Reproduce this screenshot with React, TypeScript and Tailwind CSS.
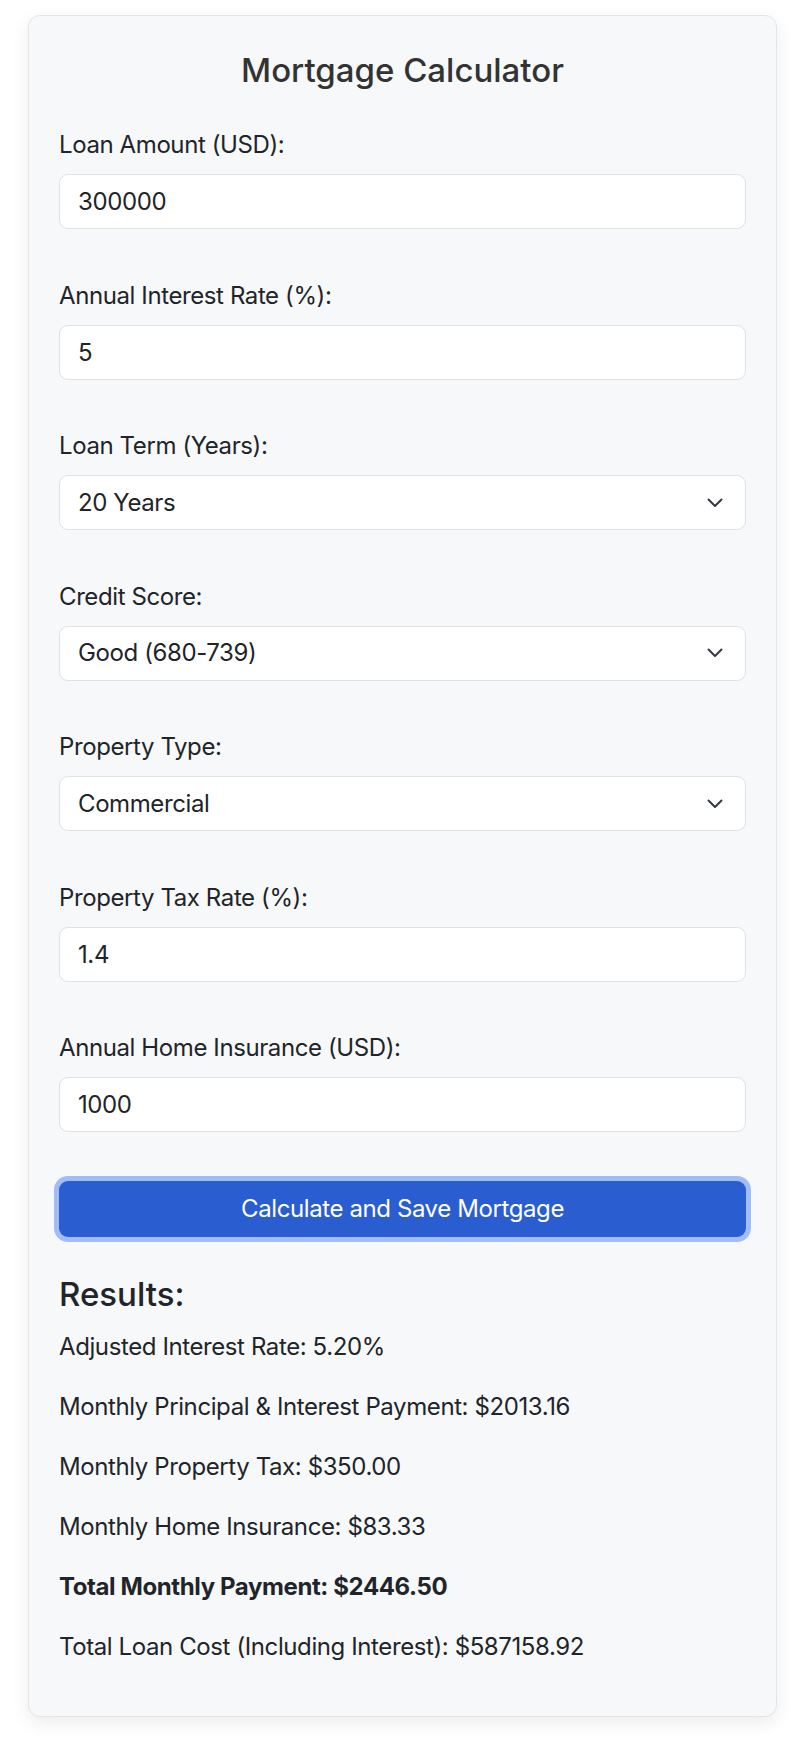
import React from "react";

const font = { fontFamily: "Inter, 'Noto Sans', sans-serif" };

function Chevron() {
  return (
    <svg
      className="pointer-events-none absolute right-[23px] top-1/2 -translate-y-1/2"
      width="16"
      height="10"
      viewBox="0 0 16 10"
      fill="none"
    >
      <path d="M1.5 1.5L8 8L14.5 1.5" stroke="#343a40" strokeWidth="2" strokeLinecap="round" strokeLinejoin="round" />
    </svg>
  );
}

function Field({ label, value }: { label: string; value: string }) {
  return (
    <div className="flex flex-col">
      <label className="mb-[11px] text-[24px] leading-[36px] tracking-[-0.4px] text-[#212529]">{label}</label>
      <input
        defaultValue={value}
        className="h-[55px] w-full rounded-[9px] border border-[#dee2e6] bg-white px-[18px] text-[24px] tracking-[-0.4px] text-[#212529] outline-none"
      />
    </div>
  );
}

function SelectField({ label, value, options }: { label: string; value: string; options: string[] }) {
  return (
    <div className="flex flex-col">
      <label className="mb-[11px] text-[24px] leading-[36px] tracking-[-0.4px] text-[#212529]">{label}</label>
      <div className="relative">
        <select
          defaultValue={value}
          className="h-[55px] w-full appearance-none rounded-[9px] border border-[#dee2e6] bg-white px-[18px] text-[24px] tracking-[-0.4px] text-[#212529] outline-none"
        >
          {options.map((o) => (
            <option key={o}>{o}</option>
          ))}
        </select>
        <Chevron />
      </div>
    </div>
  );
}

const results = [
  "Adjusted Interest Rate: 5.20%",
  "Monthly Principal & Interest Payment: $2013.16",
  "Monthly Property Tax: $350.00",
  "Monthly Home Insurance: $83.33",
];

export default function App() {
  return (
    <div className="min-h-[1748px] w-full bg-white pt-[15px]" style={font}>
      <div className="ml-[28px] w-[749px] rounded-[12px] border border-[#e3e5e9] bg-[#f7f8fa] px-[30px] pb-[51px] pt-[30px] shadow-[0_6px_18px_rgba(0,0,0,0.08)]">
        <h1 className="mb-[33px] text-center text-[33px] font-medium leading-[48px] text-[#333333]">
          Mortgage Calculator
        </h1>
        <div className="flex flex-col gap-[48.5px]">
          <Field label="Loan Amount (USD):" value="300000" />
          <Field label="Annual Interest Rate (%):" value="5" />
          <SelectField label="Loan Term (Years):" value="20 Years" options={["10 Years", "15 Years", "20 Years", "30 Years"]} />
          <SelectField
            label="Credit Score:"
            value="Good (680-739)"
            options={["Excellent (740+)", "Good (680-739)", "Fair (620-679)", "Poor (<620)"]}
          />
          <SelectField label="Property Type:" value="Commercial" options={["Residential", "Commercial"]} />
          <Field label="Property Tax Rate (%):" value="1.4" />
          <Field label="Annual Home Insurance (USD):" value="1000" />
          <button className="h-[56px] w-full rounded-[9px] bg-[#2a5dd0] text-[24px] tracking-[-0.4px] text-white shadow-[0_0_0_5px_#a1bcf6]">
            Calculate and Save Mortgage
          </button>
        </div>
        <h2 className="mt-[36.5px] text-[33px] font-medium leading-[43px] text-[#212529]">Results:</h2>
        <div className="mt-[12.5px] flex flex-col gap-[24px] text-[24px] leading-[36px] tracking-[-0.4px] text-[#212529]">
          {results.map((r) => (
            <p key={r}>{r}</p>
          ))}
          <p className="font-bold">Total Monthly Payment: $2446.50</p>
          <p>Total Loan Cost (Including Interest): $587158.92</p>
        </div>
      </div>
    </div>
  );
}
